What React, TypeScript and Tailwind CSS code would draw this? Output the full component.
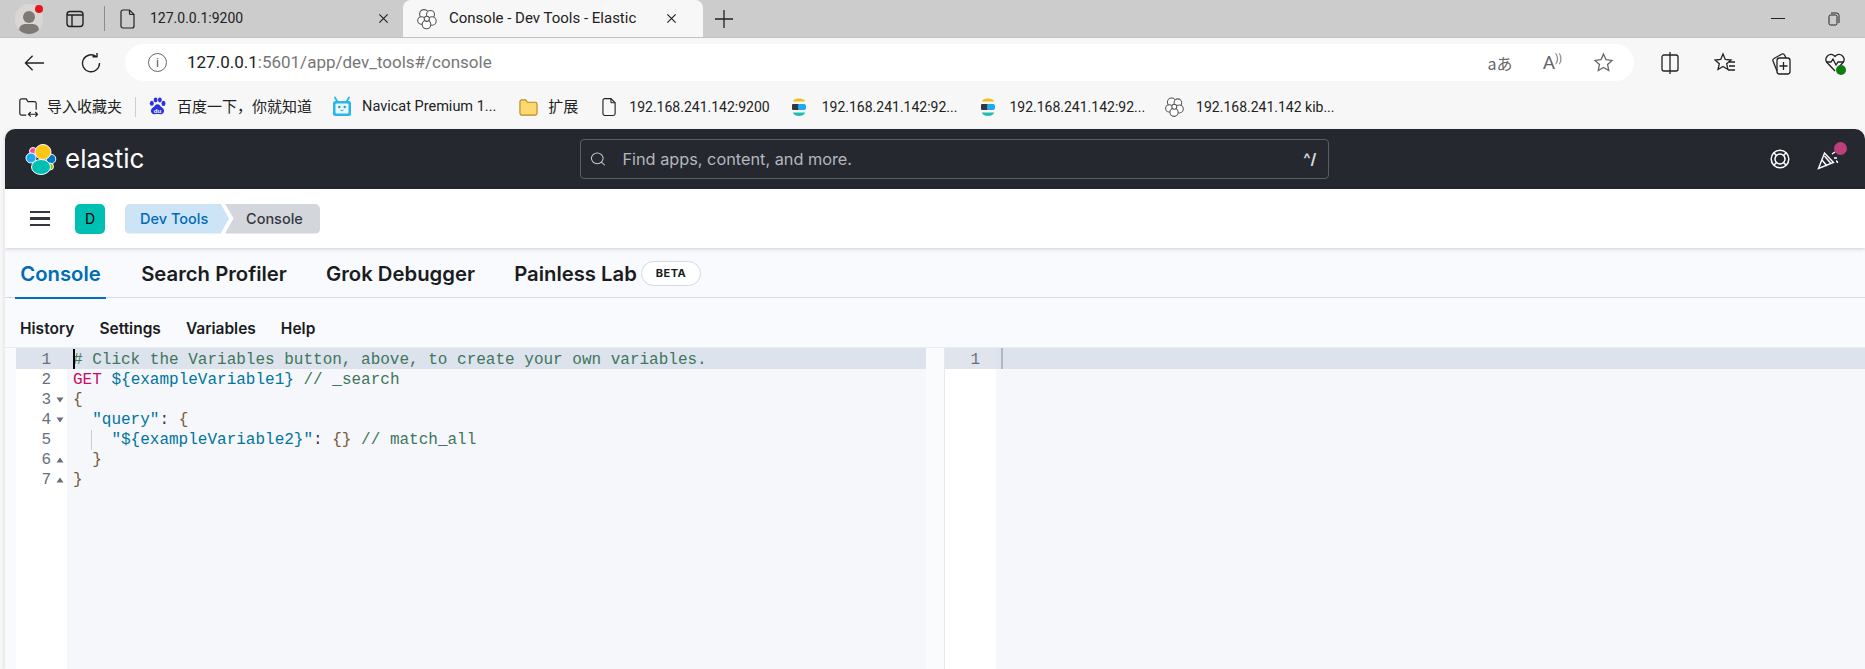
import { FC, ReactNode } from "react";
import { Search } from "lucide-react";

const uiFont = "font-['Roboto','Noto_Sans_CJK_SC',sans-serif]";

type IconProps = { className?: string };

const FileIcon: FC<IconProps> = ({ className }) => (
  <svg viewBox="0 0 16 20" className={className} fill="none" stroke="#222" strokeWidth="1.2">
    <path d="M3 1h6.5L14 5.5V17a2 2 0 0 1-2 2H3a2 2 0 0 1-2-2V3a2 2 0 0 1 2-2z" />
    <path d="M9.5 1v3.5a1 1 0 0 0 1 1H14" />
  </svg>
);

const CloverIcon: FC<IconProps> = ({ className }) => (
  <svg viewBox="0 0 22 22" className={className} fill="#fff" stroke="#555" strokeWidth="1.1">
    <circle cx="8" cy="6" r="4.4" />
    <circle cx="14.5" cy="6.5" r="4" />
    <circle cx="5.5" cy="12.5" r="3.8" />
    <circle cx="16" cy="13" r="4.2" />
    <circle cx="10.5" cy="16.5" r="4.3" />
    <circle cx="10.8" cy="10.8" r="2.6" />
  </svg>
);

const CloseIcon: FC<IconProps> = ({ className }) => (
  <svg viewBox="0 0 12 12" className={className} stroke="#222" strokeWidth="1.3">
    <path d="M1.5 1.5l9 9M10.5 1.5l-9 9" />
  </svg>
);

const ElasticFavicon: FC = () => (
  <svg viewBox="0 0 18 24" className="w-[18px] h-[24px]">
    <path d="M3 6.5C3.5 2.5 14.5 2.5 15 6.5z" fill="#f0bf1a" />
    <rect x="2" y="9" width="7" height="6" rx="1" fill="#343741" />
    <rect x="8" y="9" width="8" height="6" rx="2" fill="#1ba9f5" />
    <path d="M3 17.5c.5 4.5 11.5 4.5 12 0z" fill="#24bbb1" />
  </svg>
);

const BaiduIcon: FC = () => (
  <svg viewBox="0 0 20 22" className="w-[19px] h-[22px]" fill="#2932e1">
    <ellipse cx="4" cy="7" rx="2.1" ry="2.7" />
    <ellipse cx="8" cy="3.6" rx="2" ry="2.6" />
    <ellipse cx="12.5" cy="3.6" rx="2" ry="2.6" />
    <ellipse cx="16.3" cy="7.2" rx="2.1" ry="2.7" />
    <path d="M10 8c-2.5 0-3 2.4-4.8 3.6C3.400 12.800 2.800 14.400 3.200 16 3.700 18 5.500 18.800 7 18.500c1.500-.3 4.500-.3 6 0 1.500.3 3.300-.5 3.800-2.500.4-1.600-.2-3.200-2-4.400C13 10.400 12.500 8 10 8z" />
    <text x="10" y="17.400" fontSize="6.500" fontWeight="700" textAnchor="middle" fill="#fff" fontFamily="Liberation Sans">du</text>
  </svg>
);

const NavicatIcon: FC = () => (
  <svg viewBox="0 0 20 22" className="w-[20px] h-[22px]" fill="none">
    <path d="M5 5L3 1.500M15 5l2-3.500" stroke="#29b6e8" strokeWidth="1.800" strokeLinecap="round" />
    <rect x="1" y="5" width="18" height="15" rx="2.500" fill="#29b6e8" />
    <rect x="3.500" y="7.500" width="13" height="10" rx="1" fill="#eaf8fd" />
    <circle cx="7.300" cy="11" r="1.200" fill="#1c9ccb" />
    <circle cx="12.700" cy="11" r="1.200" fill="#1c9ccb" />
    <path d="M8.500 14c.8.800 2.200.800 3 0" stroke="#1c9ccb" strokeWidth="1" />
  </svg>
);

const ElasticLogo: FC = () => (
  <svg viewBox="0 0 32 32" className="w-[32px] h-[32px]" stroke="#fff" strokeWidth="1">
    <circle cx="8" cy="8" r="3.500" fill="#f04e98" />
    <circle cx="6" cy="15" r="5" fill="#1ba9f5" />
    <circle cx="26" cy="16" r="4.800" fill="#0077cc" />
    <circle cx="25" cy="23.500" r="3.500" fill="#93c90e" />
    <ellipse cx="18" cy="9" rx="8" ry="7.500" fill="#fec514" />
    <ellipse cx="16" cy="24" rx="9.500" ry="7.500" fill="#00bfb3" />
  </svg>
);

const Bookmark: FC<{ icon: ReactNode; label: string; labelClass: string }> = ({ icon, label, labelClass }) => (
  <div className="flex items-center shrink-0">
    {icon}
    <span className={`text-[#222] whitespace-nowrap ${labelClass}`}>{label}</span>
  </div>
);

const Tab: FC<{ label: string; active?: boolean; className: string }> = ({ label, active, className }) => (
  <div className={`h-[50px] flex items-center justify-center relative pt-[2px] ${className}`}>
    <span className={`text-[20.300px] font-semibold whitespace-nowrap ${active ? "text-[#006bb8]" : "text-[#1a1c21]"}`}>{label}</span>
    {active && <div className="absolute left-0 right-0 bottom-[-1px] h-[2px] bg-[#0071c2]" />}
  </div>
);

const Fold: FC<{ up?: boolean }> = ({ up }) => (
  <svg viewBox="0 0 8 6" className={`w-[8px] h-[6px] ${up ? "" : "rotate-180"}`} fill="#69707d">
    <path d="M4 0.500l3.500 5h-7z" />
  </svg>
);

const comment = "text-[#41755c]";
const url = "text-[#00749e]";
const brace = "text-[#7a5a35]";

const codeLines: { fold?: "up" | "down"; body: ReactNode }[] = [
  { body: <span className={comment}># Click the Variables button, above, to create your own variables.</span> },
  {
    body: (
      <>
        <span className="text-[#c80a68]">GET</span> <span className={url}>{"${exampleVariable1}"}</span>{" "}
        <span className={comment}>{"// _search"}</span>
      </>
    ),
  },
  { fold: "down", body: <span className={brace}>{"{"}</span> },
  {
    fold: "down",
    body: (
      <>
        {"  "}
        <span className={url}>"query"</span>
        <span className="text-[#343741]">:</span> <span className={brace}>{"{"}</span>
      </>
    ),
  },
  {
    body: (
      <>
        {"    "}
        <span className={url}>{'"${exampleVariable2}"'}</span>
        <span className="text-[#343741]">:</span> <span className={brace}>{"{}"}</span>{" "}
        <span className={comment}>{"// match_all"}</span>
      </>
    ),
  },
  { fold: "up", body: <span className={brace}>{"  }"}</span> },
  { fold: "up", body: <span className={brace}>{"}"}</span> },
];

const App: FC = () => {
  return (
    <div className={`w-[1865px] h-[669px] overflow-hidden bg-[#f7f7f7] flex flex-col ${uiFont}`}>
      {/* tab strip */}
      <div className="h-[38px] bg-[#cccccc] flex items-stretch shrink-0 border-b border-[#c2c2c2]">
        <div className="w-[403px] flex items-center shrink-0">
          <div className="ml-[15px] w-[28px] h-[30px] rounded-full bg-[#d9d7d3] relative overflow-hidden shrink-0">
            <div className="absolute left-[8px] top-[7px] w-[12px] h-[12px] rounded-full bg-[#7d7a76]" />
            <div className="absolute left-[4px] top-[20px] w-[20px] h-[12px] rounded-full bg-[#7d7a76]" />
          </div>
          <div className="absolute left-[35px] top-[5px] w-[8px] h-[8px] rounded-full bg-[#e8131b]" />
          <svg viewBox="0 0 18 18" className="ml-[23px] w-[18px] h-[18px] shrink-0" fill="none" stroke="#222" strokeWidth="1.400">
            <rect x="1" y="1.500" width="16" height="15" rx="3" />
            <path d="M1 5h16M6 5v11" />
          </svg>
          <div className="ml-[20px] w-px h-[25px] bg-[#8c8c8c] shrink-0" />
          <FileIcon className="ml-[15px] w-[16px] h-[20px] shrink-0" />
          <span className="ml-[14px] text-[14px] text-[#222] whitespace-nowrap">127.0.0.1:9200</span>
          <CloseIcon className="ml-[135px] w-[11px] h-[11px] shrink-0" />
        </div>
        <div className="w-[300px] bg-[#f7f7f7] rounded-t-[8px] flex items-center shrink-0">
          <CloverIcon className="ml-[13px] w-[22px] h-[22px] shrink-0" />
          <span className="ml-[11px] text-[15px] text-[#222] whitespace-nowrap">Console - Dev Tools - Elastic</span>
          <CloseIcon className="ml-[30px] w-[11px] h-[11px] shrink-0" />
        </div>
        <div className="flex items-center ml-[12px]">
          <svg viewBox="0 0 18 18" className="w-[18px] h-[18px]" stroke="#222" strokeWidth="1.300">
            <path d="M9 0v18M0 9h18" />
          </svg>
        </div>
        <div className="ml-auto flex items-center pr-[25px]">
          <div className="w-[14px] h-px bg-[#222] mr-[43px]" />
          <svg viewBox="0 0 12 14" className="w-[12px] h-[14px]" fill="none" stroke="#222" strokeWidth="1">
            <rect x="1" y="3" width="8" height="10" rx="1.500" />
            <path d="M3 1h5.500A2.500 2.500 0 0 1 11 3.500V11" />
          </svg>
        </div>
      </div>

      {/* toolbar */}
      <div className="h-[43px] flex items-center shrink-0 pt-[6px]">
        <svg viewBox="0 0 22 18" className="ml-[24px] w-[21px] h-[18px] shrink-0" fill="none" stroke="#222" strokeWidth="1.400">
          <path d="M21 9H1.500M9 1.500L1.500 9 9 16.500" />
        </svg>
        <svg viewBox="0 0 20 20" className="ml-[36px] w-[20px] h-[20px] shrink-0" fill="none" stroke="#222" strokeWidth="1.400">
          <path d="M15.500 3.800A8.500 8.500 0 1 0 18.500 10" />
          <path d="M11.500 3.800h4.500V0" />
        </svg>
        <div className="ml-[24px] w-[1509px] h-[37px] bg-white rounded-full flex items-center shrink-0">
          <div className="ml-[23px] w-[19px] h-[19px] rounded-full border border-[#666] flex items-center justify-center shrink-0">
            <span className="text-[12px] leading-none text-[#555]">i</span>
          </div>
          <span className="ml-[20px] text-[17px] text-[#222] whitespace-nowrap">
            127.0.0.1<span className="text-[#767676]">:5601/app/dev_tools#/console</span>
          </span>
          <div className="ml-auto flex items-center">
            <span className="text-[16px] text-[#666] font-['Noto_Sans_CJK_JP',sans-serif]">aあ</span>
            <span className="ml-[30px] text-[19px] text-[#666] leading-none">
              A<span className="text-[10px] align-super">))</span>
            </span>
            <svg viewBox="0 0 24 24" className="ml-[31px] mr-[20px] w-[21px] h-[21px]" fill="none" stroke="#666" strokeWidth="1.500">
              <path d="M12 2.500l2.900 6.300 6.800.8-5 4.700 1.300 6.800-6-3.400-6 3.400 1.300-6.800-5-4.700 6.800-.8z" />
            </svg>
          </div>
        </div>
        <svg viewBox="0 0 20 22" className="ml-[26px] w-[20px] h-[22px] shrink-0" fill="none" stroke="#222" strokeWidth="1.300">
          <path d="M10 0v22M10 3H4a2 2 0 0 0-2 2v12a2 2 0 0 0 2 2h6M10 3h6a2 2 0 0 1 2 2v12a2 2 0 0 1-2 2h-6" />
        </svg>
        <svg viewBox="0 0 22 22" className="ml-[34px] w-[22px] h-[22px] shrink-0" fill="none" stroke="#222" strokeWidth="1.300">
          <path d="M9 2l2.300 5.500 5.700.5-4.300 3.800 1.200 5.700L9 14.500l-5 3 1.300-5.700L1 8l5.700-.5zM15 10h6M15 14h6M14 18h7" />
        </svg>
        <svg viewBox="0 0 20 24" className="ml-[35px] w-[20px] h-[24px] shrink-0" fill="none" stroke="#222" strokeWidth="1.300">
          <rect x="6" y="7" width="13" height="16" rx="2.500" />
          <path d="M12.500 11v8M8.500 15h8M6 20L2 10a2 2 0 0 1 1-2.500L11 3a2 2 0 0 1 2.500 1L15 7" />
        </svg>
        <div className="ml-[33px] w-[22px] h-[24px] relative shrink-0">
          <svg viewBox="0 0 22 22" className="w-[22px] h-[22px]" fill="none" stroke="#222" strokeWidth="1.300">
            <path d="M11 20L3 11.500A5 5 0 0 1 10 4.500l1 1 1-1a5 5 0 0 1 7 7L15 16" />
            <path d="M2 11h5l2-3 3 6 2-3h6" />
          </svg>
          <div className="absolute right-[0px] bottom-[0px] w-[10px] h-[10px] rounded-full bg-[#107c10]" />
        </div>
      </div>

      {/* bookmarks bar */}
      <div className="h-[48px] flex items-center shrink-0 pt-[4px]">
        <svg viewBox="0 0 22 22" className="ml-[18px] w-[20px] h-[20px] shrink-0" fill="none" stroke="#222" strokeWidth="1.300">
          <path d="M9 20H4a2 2 0 0 1-2-2V4a2 2 0 0 1 2-2h5l2 3h7a2 2 0 0 1 2 2v7" />
          <path d="M12 19h9M14 16.500L11.500 19l2.500 2.500M19 16.500l2.500 2.500-2.500 2.500" />
        </svg>
        <Bookmark icon={null} label="导入收藏夹" labelClass="ml-[9px] text-[15px]" />
        <div className="ml-[13px] w-px h-[20px] bg-[#cfcfcf] shrink-0" />
        <div className="ml-[12px] shrink-0"><Bookmark icon={<BaiduIcon />} label="百度一下，你就知道" labelClass="ml-[10px] text-[15px]" /></div>
        <div className="ml-[20px] shrink-0"><Bookmark icon={<NavicatIcon />} label="Navicat Premium 1..." labelClass="ml-[10px] text-[14.500px]" /></div>
        <div className="ml-[23px] shrink-0">
          <Bookmark
            icon={
              <svg viewBox="0 0 20 20" className="w-[19px] h-[19px]" fill="#fbd872" stroke="#b88a14" strokeWidth="1.200">
                <path d="M1 4a2 2 0 0 1 2-2h4l2 2.500h8a2 2 0 0 1 2 2V16a2 2 0 0 1-2 2H3a2 2 0 0 1-2-2z" />
              </svg>
            }
            label="扩展"
            labelClass="ml-[10px] text-[15px]"
          />
        </div>
        <div className="ml-[24px] shrink-0"><Bookmark icon={<FileIcon className="w-[15px] h-[20px]" />} label="192.168.241.142:9200" labelClass="ml-[12px] text-[14px]" /></div>
        <div className="ml-[20px] shrink-0"><Bookmark icon={<ElasticFavicon />} label="192.168.241.142:92..." labelClass="ml-[14px] text-[14px]" /></div>
        <div className="ml-[22px] shrink-0"><Bookmark icon={<ElasticFavicon />} label="192.168.241.142:92..." labelClass="ml-[12px] text-[14px]" /></div>
        <div className="ml-[19px] shrink-0"><Bookmark icon={<CloverIcon className="w-[21px] h-[22px]" />} label="192.168.241.142 kib..." labelClass="ml-[11px] text-[14px]" /></div>
      </div>

      {/* kibana */}
      <div className="flex-1 ml-[5px] rounded-t-[10px] overflow-hidden flex flex-col bg-[#f8fafd] shadow-[-2px_0_3px_rgba(0,0,0,0.06)] font-['Inter',sans-serif] min-h-0">
        <div className="h-[60px] bg-[#25282f] flex items-center shrink-0">
          <div className="ml-[20px]"><ElasticLogo /></div>
          <span className="ml-[8px] text-[26px] text-white leading-none">elastic</span>
          <div className="ml-[436px] w-[749px] h-[40px] border border-[#5a5d64] rounded-[4px] flex items-center shrink-0">
            <Search className="ml-[9px] text-[#c5c7cc] scale-x-[1.1]" size={16} strokeWidth={1.500} />
            <span className="ml-[16px] text-[16.300px] text-[#b4b7bd] pt-[1px]">Find apps, content, and more.</span>
            <span className="ml-auto mr-[12px] text-[15px] font-bold text-[#d5d7db]">^/</span>
          </div>
          <div className="ml-auto flex items-center pr-[26px]">
            <svg viewBox="0 0 20 20" className="w-[20px] h-[20px]" fill="none" stroke="#fff" strokeWidth="1.500">
              <circle cx="10" cy="10" r="8.800" />
              <circle cx="10" cy="10" r="5" />
              <path d="M6.500 6.500L3.800 3.800M13.500 6.500l2.700-2.700M6.500 13.500l-2.700 2.700M13.500 13.500l2.700 2.700" />
            </svg>
            <div className="ml-[27px] w-[22px] h-[22px] relative">
              <svg viewBox="0 0 22 22" className="w-[22px] h-[22px]" fill="none" stroke="#fff" strokeWidth="1.400">
                <path d="M1.500 20.500L7.500 5l9 9.500zM5 12l5 6M7.500 8l6 7" />
                <path d="M15 6l3-2M17 10h3M19 13c1 0 1.500.8 1.500 2" />
              </svg>
              <div className="absolute left-[17px] top-[-6px] w-[13px] h-[13px] rounded-full bg-[#bc3e7b]" />
            </div>
          </div>
        </div>

        <div className="h-[59px] bg-white flex items-center shrink-0 shadow-[0_1px_4px_rgba(0,0,0,0.18)] relative">
          <div className="ml-[25px] w-[20px] flex flex-col gap-[4px] shrink-0">
            <div className="h-[2.500px] bg-[#343741]" />
            <div className="h-[2.500px] bg-[#343741]" />
            <div className="h-[2.500px] bg-[#343741]" />
          </div>
          <div className="ml-[25px] w-[30px] h-[30px] rounded-[5px] bg-[#00bfb3] flex items-center justify-center text-[14px] text-black shrink-0">D</div>
          <div className="ml-[20px] flex items-stretch h-[30px] text-[14.500px] font-medium shrink-0">
            <div className="w-[104px] pl-[15px] flex items-center bg-[#cce4f5] text-[#006bb8] rounded-l-[5px] [clip-path:polygon(0_0,92%_0,100%_50%,92%_100%,0_100%)]">Dev Tools</div>
            <div className="ml-[-4px] w-[95px] pl-[21px] flex items-center bg-[#d3d6da] text-[#343741] rounded-r-[5px] [clip-path:polygon(0_0,100%_0,100%_100%,0_100%,9%_50%)]">Console</div>
          </div>
        </div>

        <div className="h-[50px] flex items-stretch border-b border-[#d3dae6] shrink-0">
          <Tab label="Console" active className="ml-[10px] w-[91px]" />
          <Tab label="Search Profiler" className="ml-[31px] w-[154px]" />
          <Tab label="Grok Debugger" className="ml-[31px] w-[157px]" />
          <Tab label="Painless Lab" className="ml-[31px] w-[131px]" />
          <div className="ml-[0px] self-center w-[60px] h-[25px] rounded-full border border-[#d3dae6] bg-white flex items-center justify-center text-[11px] font-bold text-[#1a1c21] tracking-[0.5px] mt-[2px]">BETA</div>
        </div>

        <div className="h-[49px] flex items-center shrink-0 pt-[12px] text-[15.500px] font-semibold text-[#1a1c21]">
          <span className="ml-[15px]">History</span>
          <span className="ml-[25px]">Settings</span>
          <span className="ml-[25px]">Variables</span>
          <span className="ml-[25px]">Help</span>
        </div>

        {/* editor */}
        <div className="flex-1 flex min-h-0 pl-[11px] font-['Liberation_Mono',monospace] text-[16px] leading-[20px] border-t border-[#e9edf3]">
          <div className="w-[910px] relative flex shrink-0 bg-[#f5f7fa]">
            <div className="absolute left-0 right-0 top-0 h-[21px] bg-[#dce3ec]" />
            <div className="w-[51px] bg-white relative shrink-0">
              <div className="absolute left-0 right-0 top-0 h-[21px] bg-[#dce3ec]" />
              <div className="relative pt-[2px]">
                {codeLines.map((line, i) => (
                  <div key={i} className="h-[20px] flex items-center text-[#69707d]">
                    <span className="w-[35px] text-right">{i + 1}</span>
                    {line.fold && <span className="ml-[5px] flex"><Fold up={line.fold === "up"} /></span>}
                  </div>
                ))}
              </div>
            </div>
            <div className="relative pl-[6px] pt-[2px] whitespace-pre">
              <div className="absolute left-[6px] top-[1px] h-[20px] w-[2px] bg-black" />
              <div className="absolute left-[24px] top-[82px] h-[20px] w-px bg-[#c9ced6]" />
              {codeLines.map((line, i) => (
                <div key={i} className="h-[20px]">{line.body}</div>
              ))}
            </div>
          </div>
          <div className="w-[19px] shrink-0 border-r border-[#e4e8f0] bg-[#fafbfd]" />
          <div className="flex-1 flex bg-[#f5f7fa] relative">
            <div className="absolute left-0 right-0 top-0 h-[21px] bg-[#dce3ec]" />
            <div className="w-[51px] bg-white relative shrink-0">
              <div className="h-[21px] bg-[#e0e4ed] pt-[2px] text-[#69707d] pr-[16px] text-right">1</div>
            </div>
            <div className="relative ml-[5px] w-[2px] h-[21px] bg-[#b3b6bd]" />
          </div>
        </div>
      </div>
    </div>
  );
};

export default App;
